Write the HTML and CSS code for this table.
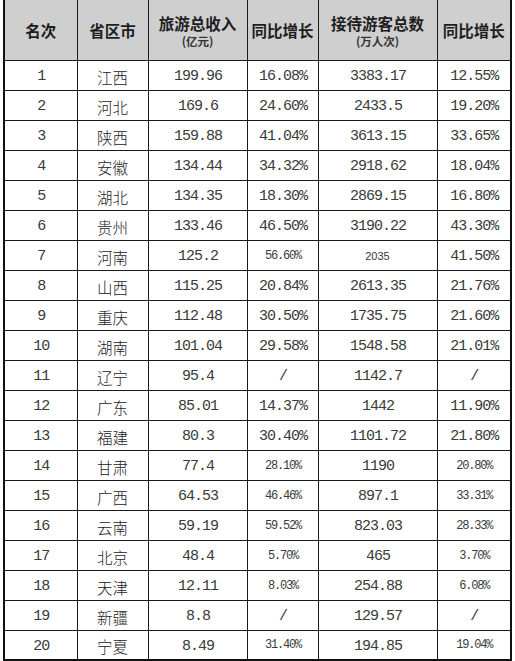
FILE: index.html
```html
<!DOCTYPE html>
<html lang="zh-CN">
<head>
<meta charset="utf-8">
<title>旅游总收入排名</title>
<link rel="stylesheet" href="styles.css">
</head>
<body>
<table class="rank">
  <colgroup>
    <col class="c1"><col class="c2"><col class="c3"><col class="c4"><col class="c5"><col class="c6">
  </colgroup>
  <thead>
    <tr>
      <th>名次</th>
      <th>省区市</th>
      <th><span class="main">旅游总收入</span><span class="sub">(亿元)</span></th>
      <th>同比增长</th>
      <th><span class="main">接待游客总数</span><span class="sub">(万人次)</span></th>
      <th>同比增长</th>
    </tr>
  </thead>
  <tbody>
    <tr><td class="n">1</td><td class="zh">江西</td><td class="n">199.96</td><td class="n">16.08%</td><td class="n">3383.17</td><td class="n">12.55%</td></tr>
    <tr><td class="n">2</td><td class="zh">河北</td><td class="n">169.6</td><td class="n">24.60%</td><td class="n">2433.5</td><td class="n">19.20%</td></tr>
    <tr><td class="n">3</td><td class="zh">陕西</td><td class="n">159.88</td><td class="n">41.04%</td><td class="n">3613.15</td><td class="n">33.65%</td></tr>
    <tr><td class="n">4</td><td class="zh">安徽</td><td class="n">134.44</td><td class="n">34.32%</td><td class="n">2918.62</td><td class="n">18.04%</td></tr>
    <tr><td class="n">5</td><td class="zh">湖北</td><td class="n">134.35</td><td class="n">18.30%</td><td class="n">2869.15</td><td class="n">16.80%</td></tr>
    <tr><td class="n">6</td><td class="zh">贵州</td><td class="n">133.46</td><td class="n">46.50%</td><td class="n">3190.22</td><td class="n">43.30%</td></tr>
    <tr><td class="n">7</td><td class="zh">河南</td><td class="n">125.2</td><td class="s">56.60%</td><td class="a">2035</td><td class="n">41.50%</td></tr>
    <tr><td class="n">8</td><td class="zh">山西</td><td class="n">115.25</td><td class="n">20.84%</td><td class="n">2613.35</td><td class="n">21.76%</td></tr>
    <tr><td class="n">9</td><td class="zh">重庆</td><td class="n">112.48</td><td class="n">30.50%</td><td class="n">1735.75</td><td class="n">21.60%</td></tr>
    <tr><td class="n">10</td><td class="zh">湖南</td><td class="n">101.04</td><td class="n">29.58%</td><td class="n">1548.58</td><td class="n">21.01%</td></tr>
    <tr><td class="n">11</td><td class="zh">辽宁</td><td class="n">95.4</td><td class="n">/</td><td class="n">1142.7</td><td class="n">/</td></tr>
    <tr><td class="n">12</td><td class="zh">广东</td><td class="n">85.01</td><td class="n">14.37%</td><td class="n">1442</td><td class="n">11.90%</td></tr>
    <tr><td class="n">13</td><td class="zh">福建</td><td class="n">80.3</td><td class="n">30.40%</td><td class="n">1101.72</td><td class="n">21.80%</td></tr>
    <tr><td class="n">14</td><td class="zh">甘肃</td><td class="n">77.4</td><td class="s">28.10%</td><td class="n">1190</td><td class="s">20.80%</td></tr>
    <tr><td class="n">15</td><td class="zh">广西</td><td class="n">64.53</td><td class="s">46.46%</td><td class="n">897.1</td><td class="s">33.31%</td></tr>
    <tr><td class="n">16</td><td class="zh">云南</td><td class="n">59.19</td><td class="s">59.52%</td><td class="n">823.03</td><td class="s">28.33%</td></tr>
    <tr><td class="n">17</td><td class="zh">北京</td><td class="n">48.4</td><td class="s">5.70%</td><td class="n">465</td><td class="s">3.70%</td></tr>
    <tr><td class="n">18</td><td class="zh">天津</td><td class="n">12.11</td><td class="s">8.03%</td><td class="n">254.88</td><td class="s">6.08%</td></tr>
    <tr><td class="n">19</td><td class="zh">新疆</td><td class="n">8.8</td><td class="n">/</td><td class="n">129.57</td><td class="n">/</td></tr>
    <tr><td class="n">20</td><td class="zh">宁夏</td><td class="n">8.49</td><td class="s">31.40%</td><td class="n">194.85</td><td class="s">19.04%</td></tr>
  </tbody>
</table>
</body>
</html>
```
FILE: styles.css
```css
html, body {
  margin: 0;
  padding: 0;
  background: #ffffff;
}

body {
  padding-left: 3px;
}

.rank {
  border-collapse: collapse;
  table-layout: fixed;
  width: 509px;
  border-left: 2px solid #111;
  border-right: 2px solid #111;
  border-bottom: 2px solid #111;
}

.c1 { width: 73px; }
.c2 { width: 71px; }
.c3 { width: 99px; }
.c4 { width: 71px; }
.c5 { width: 119px; }
.c6 { width: 74px; }

.rank th,
.rank td {
  padding: 0;
  text-align: center;
  vertical-align: middle;
  border-left: 1px solid #1a1a1a;
  border-right: 1px solid #1a1a1a;
  overflow: hidden;
  white-space: nowrap;
}

.rank thead tr {
  height: 60px;
}

.rank th {
  background: #cfcfcf;
  color: #1e1e1e;
  font-family: "Noto Sans CJK SC", "Noto Sans", sans-serif;
  font-weight: 700;
  font-size: 15.5px;
  line-height: 21px;
  border-bottom: 1px solid #1a1a1a;
  padding-top: 1px;
}

.rank th .main {
  display: block;
  line-height: 22px;
}

.rank th .sub {
  display: block;
  font-size: 11.5px;
  line-height: 15px;
  color: #333;
}

.rank tbody tr {
  height: 30px;
}

.rank td {
  border-top: 1px solid #1a1a1a;
  color: #3a3a3a;
  padding-top: 3px;
}

.rank td.n {
  font-family: "Liberation Mono", monospace;
  font-size: 15px;
  letter-spacing: -1px;
  text-indent: 1px;
}

.rank td.s {
  font-family: "Liberation Mono", monospace;
  font-size: 12px;
  letter-spacing: -1.2px;
  text-indent: 1px;
  padding-top: 1px;
}

.rank td.a {
  font-family: "Liberation Sans", Arial, sans-serif;
  font-size: 11px;
  padding-top: 1px;
}

.rank td.zh {
  font-family: "Noto Sans CJK SC", sans-serif;
  font-weight: 300;
  font-size: 15.5px;
  color: #222;
}
```
